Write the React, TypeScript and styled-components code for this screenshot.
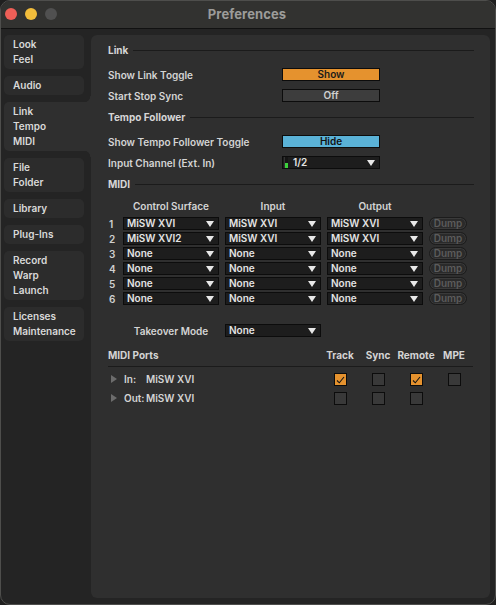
import React from "react";
import styled, { createGlobalStyle } from "styled-components";

const Global = createGlobalStyle`
  html, body { margin: 0; padding: 0; background: #1f1f1f; }
  body { font-family: Inter, "Noto Sans", "DejaVu Sans", sans-serif; }
  * { box-sizing: border-box; }
`;

const PANEL = "#2f2f2f";
const BG = "#242424";
const ORANGE = "#e5922e";

const Window = styled.div`
  width: 496px;
  height: 605px;
  border-radius: 10px;
  overflow: hidden;
  border: 1px solid #4e4e4c;
  background: ${BG};
  display: flex;
  flex-direction: column;
`;

const TitleBar = styled.div`
  height: 28px;
  flex: none;
  background: #323230;
  border-bottom: 1px solid #111;
  position: relative;
  display: flex;
  align-items: center;
  justify-content: center;
  padding-bottom: 2px;
`;

const Lights = styled.div`
  position: absolute;
  left: 4px;
  top: 7px;
  display: flex;
  gap: 8px;
`;

const Light = styled.span<{ $c: string }>`
  width: 12px;
  height: 12px;
  border-radius: 50%;
  background: ${(p) => p.$c};
`;

const Title = styled.div`
  font-size: 13px;
  font-weight: 700;
  color: #9c9c9a;
  letter-spacing: 0.1px;
  margin-left: -2px;
`;

const Body = styled.div`
  flex: 1;
  display: flex;
  gap: 7px;
  padding: 6px 5px 6px 3px;
  min-height: 0;
`;

const Sidebar = styled.div`
  width: 80px;
  flex: none;
  display: flex;
  flex-direction: column;
  gap: 7px;
`;

const NavItem = styled.div<{ $active?: boolean }>`
  position: relative;
  background: ${(p) => (p.$active ? PANEL : "#2c2c2c")};
  border-radius: ${(p) => (p.$active ? "5px 0 0 5px" : "5px")};
  margin-right: ${(p) => (p.$active ? "-7px" : "0")};
  padding: 2px 0 2px 9px;
  font-size: 10px;
  font-weight: 600;
  line-height: 15px;
  color: #d9d9d9;
  z-index: 1;
  ${(p) =>
    p.$active &&
    `
    &::before, &::after {
      content: "";
      position: absolute;
      right: 0;
      width: 7px;
      height: 6px;
    }
    &::before {
      top: -6px;
      background: radial-gradient(circle at 0 0, transparent 6px, ${PANEL} 6.6px);
    }
    &::after {
      bottom: -6px;
      background: radial-gradient(circle at 0 100%, transparent 6px, ${PANEL} 6.6px);
    }
  `}
`;

const Panel = styled.div`
  flex: 1;
  background: ${PANEL};
  border-radius: 6px;
  padding: 8px 16px 0 17px;
  display: flex;
  flex-direction: column;
  color: #d4d4d4;
  font-size: 10px;
  font-weight: 600;
`;

const SectionHeader = styled.div<{ $mt?: number }>`
  display: flex;
  align-items: center;
  gap: 5px;
  height: 14px;
  margin-top: ${(p) => p.$mt ?? 0}px;
  font-weight: 700;
  color: #d6d6d6;
  &::after {
    content: "";
    flex: 1;
    height: 1px;
    background: #1b1b1b;
  }
`;

const SettingRow = styled.div<{ $mt: number }>`
  display: flex;
  align-items: center;
  height: 13px;
  margin-top: ${(p) => p.$mt}px;
`;

const Label = styled.div`
  width: 174px;
  flex: none;
  white-space: nowrap;
`;

const Toggle = styled.div<{ $bg: string; $fg: string }>`
  width: 98px;
  height: 13px;
  border: 1px solid #0c0c0c;
  background: ${(p) => p.$bg};
  color: ${(p) => p.$fg};
  display: flex;
  align-items: center;
  justify-content: center;
  font-size: 10px;
  line-height: 11px;
  font-weight: 600;
`;

const SelectBox = styled.div<{ $w: number }>`
  width: ${(p) => p.$w}px;
  height: 13px;
  border: 1px solid #0c0c0c;
  background: #1d1d1d;
  color: #e4e4e4;
  display: flex;
  align-items: center;
  padding: 0 4px 0 3px;
  gap: 5px;
  font-size: 10px;
  line-height: 11px;
  font-weight: 600;
  white-space: nowrap;
  overflow: hidden;
`;

const SelectText = styled.span`
  flex: 1;
`;

const Caret = styled.span`
  width: 0;
  height: 0;
  border-left: 4px solid transparent;
  border-right: 4px solid transparent;
  border-top: 6px solid #e8e8e8;
  flex: none;
`;

const Meter = styled.span`
  width: 4px;
  height: 11px;
  margin-left: -2px;
  background: linear-gradient(to bottom, #151515 0 55%, #3cd13c 55% 100%);
  border-left: 1px solid #333;
  flex: none;
`;

const Select = ({ value, w = 96, meter }: { value: string; w?: number; meter?: boolean }) => (
  <SelectBox $w={w}>
    {meter && <Meter />}
    <SelectText>{value}</SelectText>
    <Caret />
  </SelectBox>
);

const MidiGrid = styled.div`
  display: grid;
  grid-template-columns: 9px 96px 96px 96px 38px;
  column-gap: 6px;
  row-gap: 2px;
  margin-top: 9px;
  align-items: center;
`;

const ColHead = styled.div<{ $col: number }>`
  grid-column: ${(p) => p.$col};
  text-align: center;
  height: 12px;
  line-height: 12px;
  margin-bottom: 3px;
  color: #d4d4d4;
  white-space: nowrap;
`;

const RowNum = styled.div`
  grid-column: 1;
  padding-left: 1px;
  color: #cfcfcf;
`;

const Dump = styled.div`
  height: 13px;
  border-radius: 7px;
  border: 1px solid #1c1c1c;
  background: #2a2a2a;
  box-shadow: inset 0 0 0 1px #3a3a3a;
  color: #5c5c5c;
  font-size: 10px;
  line-height: 11px;
  text-align: center;
`;

const TakeoverGrid = styled(MidiGrid)`
  margin-top: 19px;
`;

const TakeoverLabel = styled.div`
  grid-column: 2;
  text-align: center;
  white-space: nowrap;
`;

const PortsGrid = styled.div`
  display: grid;
  grid-template-columns: 213px repeat(4, 38px);
  margin-top: 11px;
  align-items: center;
`;

const PortsHead = styled.div<{ $center?: boolean }>`
  height: 19px;
  padding-bottom: 5px;
  display: flex;
  align-items: center;
  justify-content: ${(p) => (p.$center ? "center" : "flex-start")};
  border-bottom: 1px solid #1b1b1b;
  font-weight: 700;
  white-space: nowrap;
`;

const PortCell = styled.div<{ $h: number }>`
  height: ${(p) => p.$h}px;
  display: flex;
  align-items: flex-end;
  justify-content: center;
`;

const PortLabel = styled(PortCell)`
  justify-content: flex-start;
  padding-bottom: 1px;
`;

const Expander = styled.span`
  width: 0;
  height: 0;
  border-top: 4px solid transparent;
  border-bottom: 4px solid transparent;
  border-left: 6px solid #6c6c6c;
  margin: 0 7px 2px 3px;
`;

const Dir = styled.span`
  width: 22px;
  display: inline-block;
`;

const Check = styled.div<{ $on?: boolean }>`
  width: 13px;
  height: 13px;
  border: 1px solid #0c0c0c;
  background: ${(p) => (p.$on ? ORANGE : "#393939")};
  display: flex;
  align-items: center;
  justify-content: center;
`;

const CheckBox = ({ on }: { on?: boolean }) => (
  <Check $on={on}>
    {on && (
      <svg width="9" height="8" viewBox="0 0 9 8">
        <path d="M1 4.5 L3.3 6.8 L8 1" fill="none" stroke="#151515" strokeWidth="1.1" />
      </svg>
    )}
  </Check>
);

const navItems: { lines: string[]; active?: boolean }[] = [
  { lines: ["Look", "Feel"] },
  { lines: ["Audio"] },
  { lines: ["Link", "Tempo", "MIDI"], active: true },
  { lines: ["File", "Folder"] },
  { lines: ["Library"] },
  { lines: ["Plug-Ins"] },
  { lines: ["Record", "Warp", "Launch"] },
  { lines: ["Licenses", "Maintenance"] },
];

const midiRows = [
  ["MiSW XVI", "MiSW XVI", "MiSW XVI"],
  ["MiSW XVI2", "MiSW XVI", "MiSW XVI"],
  ["None", "None", "None"],
  ["None", "None", "None"],
  ["None", "None", "None"],
  ["None", "None", "None"],
];

export default function App() {
  return (
    <>
      <Global />
      <Window>
        <TitleBar>
          <Lights>
            <Light $c="#ee5f57" />
            <Light $c="#f2bd3b" />
            <Light $c="#505050" />
          </Lights>
          <Title>Preferences</Title>
        </TitleBar>
        <Body>
          <Sidebar>
            {navItems.map((n) => (
              <NavItem key={n.lines.join()} $active={n.active}>
                {n.lines.map((l) => (
                  <div key={l}>{l}</div>
                ))}
              </NavItem>
            ))}
          </Sidebar>
          <Panel>
            <SectionHeader>Link</SectionHeader>
            <SettingRow $mt={11}>
              <Label>Show Link Toggle</Label>
              <Toggle $bg={ORANGE} $fg="#1a1a1a">Show</Toggle>
            </SettingRow>
            <SettingRow $mt={8}>
              <Label>Start Stop Sync</Label>
              <Toggle $bg="#3d3d3d" $fg="#d0d0d0">Off</Toggle>
            </SettingRow>
            <SectionHeader $mt={8}>Tempo Follower</SectionHeader>
            <SettingRow $mt={11}>
              <Label>Show Tempo Follower Toggle</Label>
              <Toggle $bg="#5ab2d7" $fg="#111">Hide</Toggle>
            </SettingRow>
            <SettingRow $mt={8}>
              <Label>Input Channel (Ext. In)</Label>
              <Select value="1/2" w={98} meter />
            </SettingRow>
            <SectionHeader $mt={8}>MIDI</SectionHeader>
            <MidiGrid>
              <ColHead $col={2}>Control Surface</ColHead>
              <ColHead $col={3}>Input</ColHead>
              <ColHead $col={4}>Output</ColHead>
              <div />
              {midiRows.map((r, i) => (
                <React.Fragment key={i}>
                  <RowNum>{i + 1}</RowNum>
                  {r.map((v, j) => (
                    <Select key={j} value={v} />
                  ))}
                  <Dump>Dump</Dump>
                </React.Fragment>
              ))}
            </MidiGrid>
            <TakeoverGrid>
              <TakeoverLabel>Takeover Mode</TakeoverLabel>
              <Select value="None" />
            </TakeoverGrid>
            <PortsGrid>
              <PortsHead>MIDI Ports</PortsHead>
              <PortsHead $center>Track</PortsHead>
              <PortsHead $center>Sync</PortsHead>
              <PortsHead $center>Remote</PortsHead>
              <PortsHead $center>MPE</PortsHead>

              <PortLabel $h={19}>
                <Expander />
                <Dir>In:</Dir>MiSW XVI
              </PortLabel>
              <PortCell $h={19}><CheckBox on /></PortCell>
              <PortCell $h={19}><CheckBox /></PortCell>
              <PortCell $h={19}><CheckBox on /></PortCell>
              <PortCell $h={19}><CheckBox /></PortCell>

              <PortLabel $h={19}>
                <Expander />
                <Dir>Out:</Dir>MiSW XVI
              </PortLabel>
              <PortCell $h={19}><CheckBox /></PortCell>
              <PortCell $h={19}><CheckBox /></PortCell>
              <PortCell $h={19}><CheckBox /></PortCell>
              <PortCell $h={19} />
            </PortsGrid>
          </Panel>
        </Body>
      </Window>
    </>
  );
}
